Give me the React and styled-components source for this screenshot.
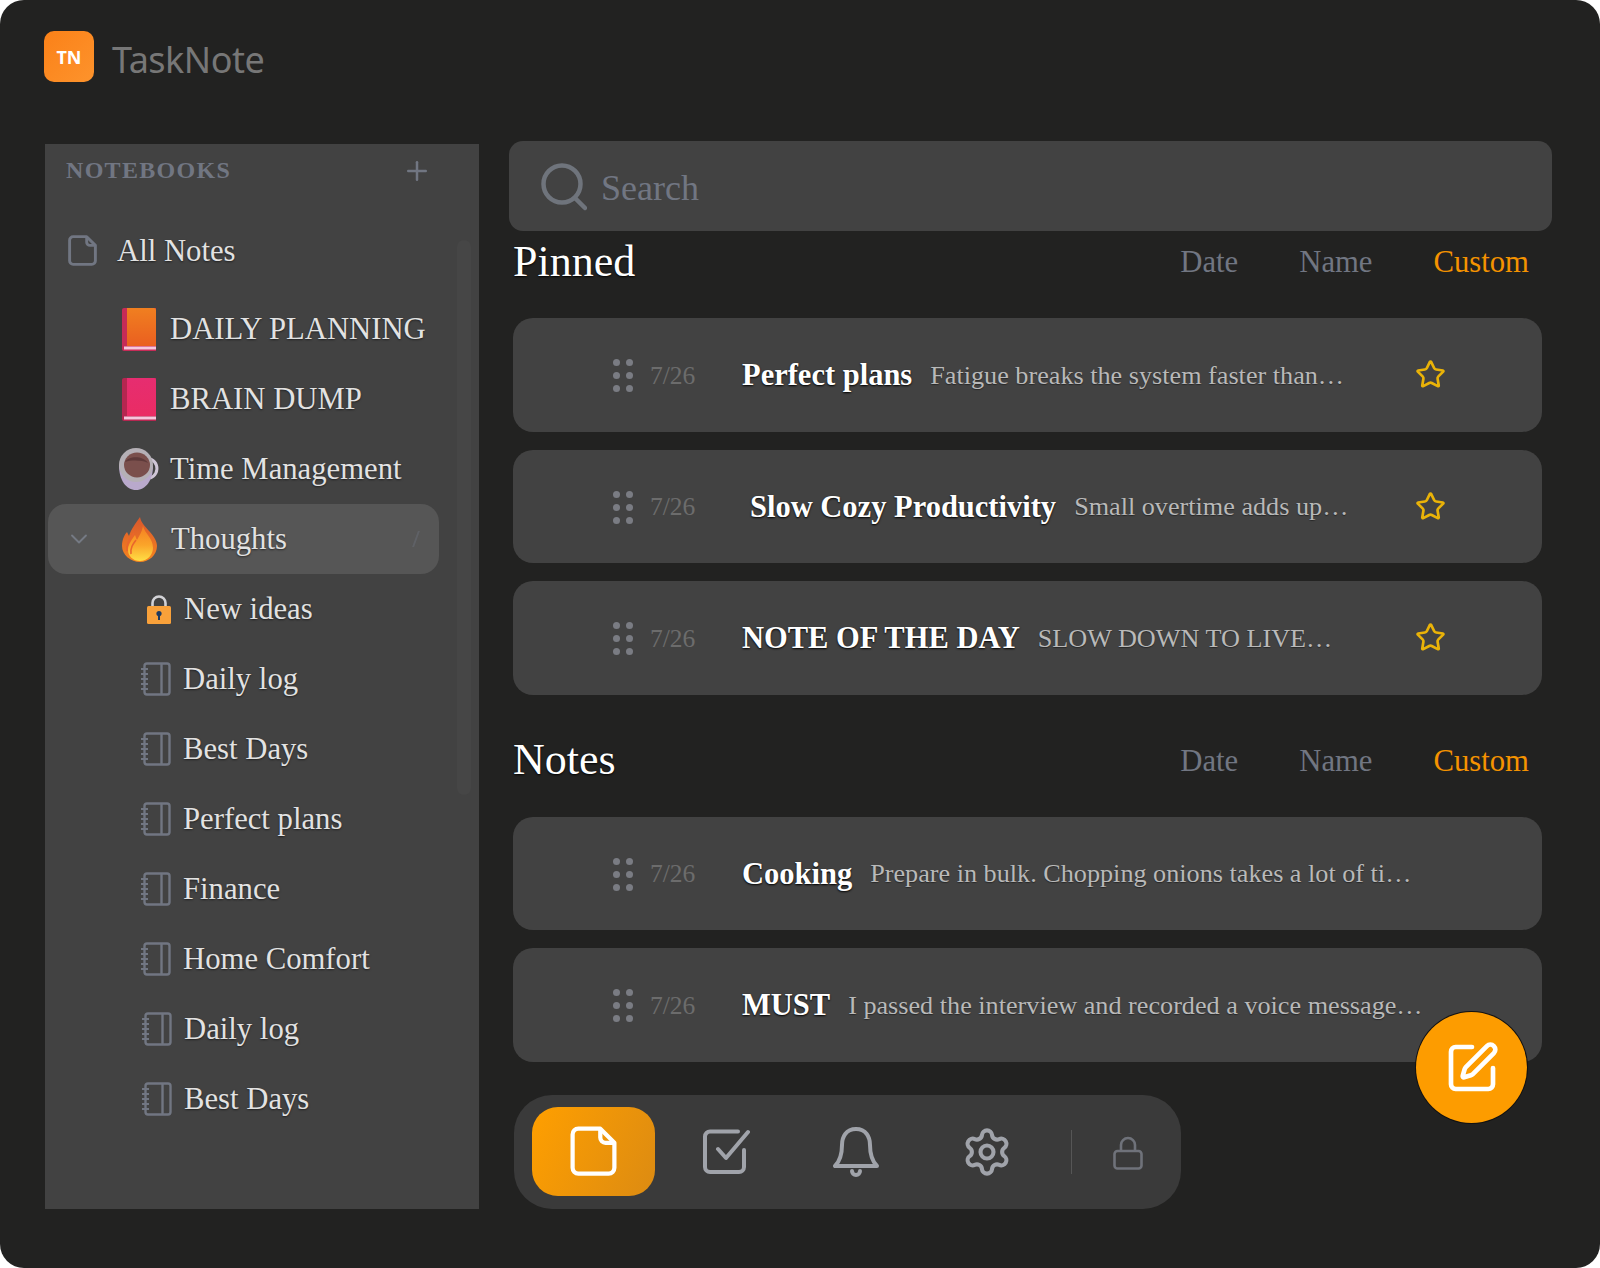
import React from "react";
import styled, { createGlobalStyle } from "styled-components";
import { ChevronDown, Plus, Settings, SquarePen, Star } from "lucide-react";

const Grey = "#717682";
const Orange = "#fd9c00";
const Panel = "#424242";

const GlobalStyle = createGlobalStyle`
  html, body {
    margin: 0;
    background: #fff;
  }
  * {
    box-sizing: border-box;
  }
`;

const Window = styled.div`
  position: relative;
  width: 1600px;
  height: 1268px;
  padding: 31px 48px 0 45px;
  overflow: hidden;
  border-radius: 24px;
  background: #222221;
  font-family: "Liberation Serif", "Times New Roman", serif;
`;

const Brand = styled.header`
  display: flex;
  align-items: center;
  gap: 18px;
  height: 51px;
  margin-left: -1px;
`;

const Logo = styled.div`
  display: flex;
  align-items: center;
  justify-content: center;
  width: 50px;
  height: 51px;
  border-radius: 10px;
  background: linear-gradient(135deg, #fb8118, #fd932c);
  color: #fff;
  font: 700 18px "Noto Sans", sans-serif;
`;

const BrandName = styled.div`
  color: #777;
  font: 400 36px "Noto Sans", sans-serif;
  letter-spacing: -0.5px;
  margin-top: 5px;
`;

const Body = styled.div`
  display: flex;
  align-items: flex-start;
  gap: 30px;
  margin-top: 59px;
`;

const Sidebar = styled.aside`
  position: relative;
  flex: 0 0 434px;
  height: 1065px;
  margin-top: 3px;
  background: ${Panel};
`;

const ScrollThumb = styled.div`
  position: absolute;
  top: 96px;
  right: 8px;
  width: 14px;
  height: 555px;
  border-radius: 7px;
  background: #464646;
`;

const SidebarHead = styled.div`
  display: flex;
  align-items: center;
  justify-content: space-between;
  height: 72px;
  padding: 0 47px 19px 21px;
  color: ${Grey};
  font-size: 24px;
  font-weight: 700;
  letter-spacing: 1.3px;
`;

const TreeRow = styled.div`
  position: relative;
  display: flex;
  align-items: center;
  gap: ${p => p.$gap}px;
  width: 391px;
  height: 70px;
  margin: 0 0 ${p => p.$after || 0}px 3px;
  padding-left: ${p => p.$indent}px;
  border-radius: 18px;
  background: ${p => (p.$active ? "#565656" : "transparent")};
  color: #e2e2e2;
  font-size: 30.7px;
  text-shadow: 0 1px 2px rgba(0, 0, 0, 0.55);
  white-space: nowrap;
`;

const TreeIcon = styled.span`
  display: flex;
  align-items: center;
  justify-content: center;
  flex: 0 0 ${p => p.$size}px;
  height: 50px;
`;

const Toggle = styled.span`
  position: absolute;
  left: 17px;
  top: 21px;
  display: flex;
  color: #757a84;
`;

const FadedMark = styled.span`
  position: absolute;
  right: 14px;
  top: 27px;
  width: 10px;
  height: 16px;
  border-left: 2px solid #5f6166;
  transform: skewX(-20deg);
`;

const Main = styled.main`
  flex: 0 0 1043px;
`;

const SearchBar = styled.div`
  display: flex;
  align-items: center;
  gap: 14px;
  height: 90px;
  padding: 2px 0 0 32px;
  border-radius: 14px;
  background: ${Panel};
  color: ${Grey};
  font-size: 36px;
`;

const SearchLabel = styled.span`
  margin-top: 2px;
`;

const SectionHead = styled.div`
  display: flex;
  align-items: center;
  height: 62px;
  margin: ${p => p.$top}px 0 26px 4px;
  padding-right: 23px;
`;

const SectionTitle = styled.h2`
  flex: 1;
  margin: 0;
  color: #fff;
  font-size: 44px;
  font-weight: 400;
  text-shadow: 0 1px 2px #000;
`;

const SortTabs = styled.div`
  display: flex;
  gap: 61px;
  margin-top: 3px;
  font-size: 30.7px;
`;

const SortTab = styled.span`
  color: ${p => (p.$active ? "#f59300" : Grey)};
`;

const NoteList = styled.div`
  display: flex;
  flex-direction: column;
  gap: 18px;
  margin: 0 10px 0 4px;
`;

const NoteRow = styled.div`
  display: flex;
  align-items: center;
  height: 113.5px;
  padding: 0 96px 0 100px;
  border-radius: 20px;
  background: ${Panel};
`;

const Grip = styled.div`
  display: grid;
  grid-template-columns: repeat(2, 7px);
  gap: 6px;
  flex: none;
  margin-top: 2px;
  span {
    width: 7px;
    height: 7px;
    border-radius: 50%;
    background: #7a7c83;
  }
`;

const NoteDate = styled.span`
  flex: none;
  width: 92px;
  margin: 2px 0 0 17px;
  color: #6c6c6c;
  font-size: 25.5px;
`;

const NoteTitle = styled.span`
  flex: none;
  margin: 2px 0 0 ${p => p.$shift || 0}px;
  color: #fff;
  font-size: 30.5px;
  font-weight: 700;
  text-shadow: 0 1px 2px #000;
`;

const NoteText = styled.span`
  flex: 1;
  margin: 2px 0 0 18px;
  color: #b9b9b9;
  font-size: 26.2px;
  white-space: nowrap;
  text-shadow: 0 1px 1px rgba(0, 0, 0, 0.4);
`;

const StarIcon = styled(Star)`
  flex: none;
  margin-left: 1px;
  color: #eab308;
`;

const BottomNav = styled.nav`
  display: flex;
  align-items: center;
  gap: 8px;
  width: 667px;
  height: 114px;
  margin: 33px 0 0 5px;
  padding-left: 18px;
  border-radius: 38px;
  background: #3a3a3a;
`;

const NavItem = styled.div`
  display: flex;
  align-items: center;
  justify-content: center;
  flex: 0 0 123px;
  height: 89px;
  border-radius: 26px;
  background: ${p => (p.$active ? "linear-gradient(115deg, #ff9f00, #dc8b12)" : "transparent")};
  color: #a0a3aa;
`;

const NavDivider = styled.div`
  flex: none;
  width: 1px;
  height: 44px;
  margin-left: 15px;
  background: #565656;
`;

const NavLock = styled.div`
  display: flex;
  justify-content: center;
  flex: 0 0 58px;
  margin: 3px 0 0 19px;
  color: #6f727a;
`;

const Fab = styled.div`
  position: absolute;
  left: 1416px;
  top: 1012px;
  display: flex;
  align-items: center;
  justify-content: center;
  width: 111px;
  height: 111px;
  border-radius: 50%;
  background: ${Orange};
  box-shadow: 0 0 0 1px #111;
  color: #fff;
`;

const CheckSvg = styled.svg`
  margin-left: 4px;
`;

const PageIcon = ({ size = 30, color = "#717682", width = 3 }) => (
  <svg width={size} height={size * 1.07} viewBox="0 0 45 48" fill="none" stroke={color} strokeWidth={width * 1.5} strokeLinejoin="round">
    <path d="M8 2.5H29L42.5 16V40a5.5 5.5 0 0 1-5.5 5.5H8A5.5 5.5 0 0 1 2.5 40V8A5.5 5.5 0 0 1 8 2.5Z" />
    <path d="M29 2.5V11a5 5 0 0 0 5 5h8.5" />
  </svg>
);

const BookIcon = ({ id, from, to, spine }) => (
  <svg width="34" height="43" viewBox="0 0 34 43">
    <defs>
      <linearGradient id={id} x1="0" y1="0" x2="0" y2="1">
        <stop offset="0" stopColor={from} />
        <stop offset="1" stopColor={to} />
      </linearGradient>
    </defs>
    <path d="M2 0H34V43H2A2 2 0 0 1 0 41V2A2 2 0 0 1 2 0Z" fill={spine} />
    <path d="M5 0H32A2 2 0 0 1 34 2V38H5Z" fill={`url(#${id})`} />
    <rect x="2" y="38.5" width="32" height="3" fill="#f6c6dc" />
  </svg>
);

const CupIcon = () => (
  <svg width="42" height="42" viewBox="0 0 42 42">
    <path d="M26 11a8.5 8.5 0 1 1 6 19" fill="none" stroke="#cfc6d6" strokeWidth="3" />
    <path d="M1 17C1 32 8 42 18 42s17-10 17-24Z" fill="#b9a9cc" />
    <ellipse cx="18" cy="17" rx="17" ry="17" fill="#b5b0b6" />
    <ellipse cx="19" cy="17" rx="13" ry="12.5" fill="#7a4f4c" />
    <path d="M7 14c3-6 18-7 23 1-6-3-17-3-23-1Z" fill="#5e3a3a" />
  </svg>
);

const FlameIcon = () => (
  <svg width="35" height="45" viewBox="0 0 35 45">
    <defs>
      <linearGradient id="flameOuter" x1="0" y1="0" x2="0" y2="1">
        <stop offset="0" stopColor="#d9572c" />
        <stop offset="1" stopColor="#f5851f" />
      </linearGradient>
      <linearGradient id="flameInner" x1="0" y1="0" x2="0" y2="1">
        <stop offset="0" stopColor="#f47f22" />
        <stop offset="0.55" stopColor="#fba52a" />
        <stop offset="1" stopColor="#ffdf45" />
      </linearGradient>
    </defs>
    <path d="M18 0c1 6 5 9 10 15 4 5 7 9 7 14 0 9-8 16-17 16S0 38 0 29c0-7 3-12 5-14l2 4c2-7 7-13 11-19Z" fill="url(#flameOuter)" />
    <path d="M21 9c2 8 10 12 10 22 0 7-6 13-13 13S6 39 6 33c0-6 4-10 7-15 1 2 1 4 2 5 2-4 5-8 6-14Z" fill="url(#flameInner)" />
    <path d="M5 34c-1-7 3-12 7-18M9 37c-1-6 2-10 5-14" fill="none" stroke="#e9662c" strokeWidth="1.6" />
  </svg>
);

const LockEmoji = () => (
  <svg width="24" height="29" viewBox="0 0 24 29">
    <path d="M5.5 13V8a6.5 6.5 0 0 1 13 0v5" fill="none" stroke="#d2d2d6" strokeWidth="2.6" />
    <rect y="11" width="24" height="18" rx="1.5" fill="#f9a13a" />
    <circle cx="12" cy="18.5" r="2.6" fill="#1f3a5f" />
    <rect x="11" y="19" width="2" height="6" fill="#1f3a5f" />
  </svg>
);

const NotebookIcon = () => (
  <svg width="30" height="34" viewBox="0 0 30 34" fill="none" stroke="#717682" strokeWidth="2.4">
    <rect x="3.5" y="1.5" width="25" height="31" rx="2.5" />
    <path d="M20.5 1.5v31" />
    <path d="M0 7h7M0 12h7M0 17h7M0 22h7M0 27h7" strokeWidth="2" />
  </svg>
);

const SearchIcon = () => (
  <svg width="46" height="48" viewBox="0 0 46 48" fill="none" stroke="#6f747c" strokeWidth="4.5" strokeLinecap="round">
    <circle cx="21" cy="21" r="18.5" />
    <path d="M34 35l10 10" />
  </svg>
);

const CheckIcon = () => (
  <CheckSvg width="47" height="45" viewBox="0 0 47 45" fill="none" stroke="currentColor" strokeWidth="4" strokeLinecap="round" strokeLinejoin="round">
    <path d="M35 2.5H7A5 5 0 0 0 2 7.5V38a5 5 0 0 0 5 5H36a5 5 0 0 0 5-5V21" />
    <path d="M15 20l8 9L45 3" />
  </CheckSvg>
);

const BellIcon = () => (
  <svg width="46" height="50" viewBox="0 0 46 50" fill="none" stroke="currentColor" strokeWidth="4" strokeLinecap="round" strokeLinejoin="round">
    <path d="M23 2C13 2 9 10 9 18c0 8-1 15-7 21h42c-6-6-7-13-7-21 0-8-4-16-14-16Z" />
    <path d="M19 44a4 4 0 0 0 8 0" />
  </svg>
);

const SmallLock = () => (
  <svg width="30" height="34" viewBox="0 0 30 34" fill="none" stroke="currentColor" strokeWidth="2.6">
    <rect x="1.5" y="15" width="27" height="17.5" rx="3" />
    <path d="M8 15V9a7 7 0 0 1 14 0v6" />
  </svg>
);

const pinned = [
  { title: "Perfect plans", text: "Fatigue breaks the system faster than…" },
  { title: "Slow Cozy Productivity", text: "Small overtime adds up…", shift: 8 },
  { title: "NOTE OF THE DAY", text: "SLOW DOWN TO LIVE…" },
];

const notes = [
  { title: "Cooking", text: "Prepare in bulk. Chopping onions takes a lot of ti…" },
  { title: "MUST", text: "I passed the interview and recorded a voice message…" },
];

const notebooks = ["Daily log", "Best Days", "Perfect plans", "Finance", "Home Comfort", "Daily log", "Best Days"];

const Note = ({ title, text, shift, starred }) => (
  <NoteRow>
    <Grip>
      {[0, 1, 2, 3, 4, 5].map(i => (
        <span key={i} />
      ))}
    </Grip>
    <NoteDate>7/26</NoteDate>
    <NoteTitle $shift={shift}>{title}</NoteTitle>
    <NoteText>{text}</NoteText>
    {starred && <StarIcon size={31} strokeWidth={2.1} />}
  </NoteRow>
);

const SectionHeader = ({ title, top }) => (
  <SectionHead $top={top}>
    <SectionTitle>{title}</SectionTitle>
    <SortTabs>
      <SortTab>Date</SortTab>
      <SortTab>Name</SortTab>
      <SortTab $active>Custom</SortTab>
    </SortTabs>
  </SectionHead>
);

const App = () => (
  <Window>
    <GlobalStyle />
    <Brand>
      <Logo>TN</Logo>
      <BrandName>TaskNote</BrandName>
    </Brand>
    <Body>
      <Sidebar>
        <ScrollThumb />
        <SidebarHead>
          NOTEBOOKS
          <Plus size={30} strokeWidth={2} />
        </SidebarHead>
        <TreeRow $indent={18} $gap={18} $after={8}>
          <TreeIcon $size={33}>
            <PageIcon size={29} />
          </TreeIcon>
          All Notes
        </TreeRow>
        <TreeRow $indent={73} $gap={13}>
          <TreeIcon $size={36}>
            <BookIcon id="bookOrange" from="#f07f20" to="#ea5f20" spine="#c62b57" />
          </TreeIcon>
          DAILY PLANNING
        </TreeRow>
        <TreeRow $indent={73} $gap={13}>
          <TreeIcon $size={36}>
            <BookIcon id="bookPink" from="#e62d70" to="#ea2c64" spine="#b52650" />
          </TreeIcon>
          BRAIN DUMP
        </TreeRow>
        <TreeRow $indent={70} $gap={10}>
          <TreeIcon $size={39}>
            <CupIcon />
          </TreeIcon>
          Time Management
        </TreeRow>
        <TreeRow $indent={73} $gap={14} $active>
          <Toggle>
            <ChevronDown size={28} strokeWidth={1.6} />
          </Toggle>
          <TreeIcon $size={36}>
            <FlameIcon />
          </TreeIcon>
          Thoughts
          <FadedMark />
        </TreeRow>
        <TreeRow $indent={97} $gap={12}>
          <TreeIcon $size={27}>
            <LockEmoji />
          </TreeIcon>
          New ideas
        </TreeRow>
        {notebooks.map((name, i) => (
          <TreeRow key={i} $indent={i > 4 ? 93 : 92} $gap={11}>
            <TreeIcon $size={32}>
              <NotebookIcon />
            </TreeIcon>
            {name}
          </TreeRow>
        ))}
      </Sidebar>
      <Main>
        <SearchBar>
          <SearchIcon />
          <SearchLabel>Search</SearchLabel>
        </SearchBar>
        <SectionHeader title="Pinned" top={-1} />
        <NoteList>
          {pinned.map(note => (
            <Note key={note.title} {...note} starred />
          ))}
        </NoteList>
        <SectionHeader title="Notes" top={34} />
        <NoteList>
          {notes.map(note => (
            <Note key={note.title} {...note} />
          ))}
        </NoteList>
        <BottomNav>
          <NavItem $active>
            <PageIcon size={47} color="#fff" width={2.7} />
          </NavItem>
          <NavItem>
            <CheckIcon />
          </NavItem>
          <NavItem>
            <BellIcon />
          </NavItem>
          <NavItem>
            <Settings size={52} strokeWidth={1.9} />
          </NavItem>
          <NavDivider />
          <NavLock>
            <SmallLock />
          </NavLock>
        </BottomNav>
      </Main>
    </Body>
    <Fab>
      <SquarePen size={56} strokeWidth={2} />
    </Fab>
  </Window>
);

export default App;
